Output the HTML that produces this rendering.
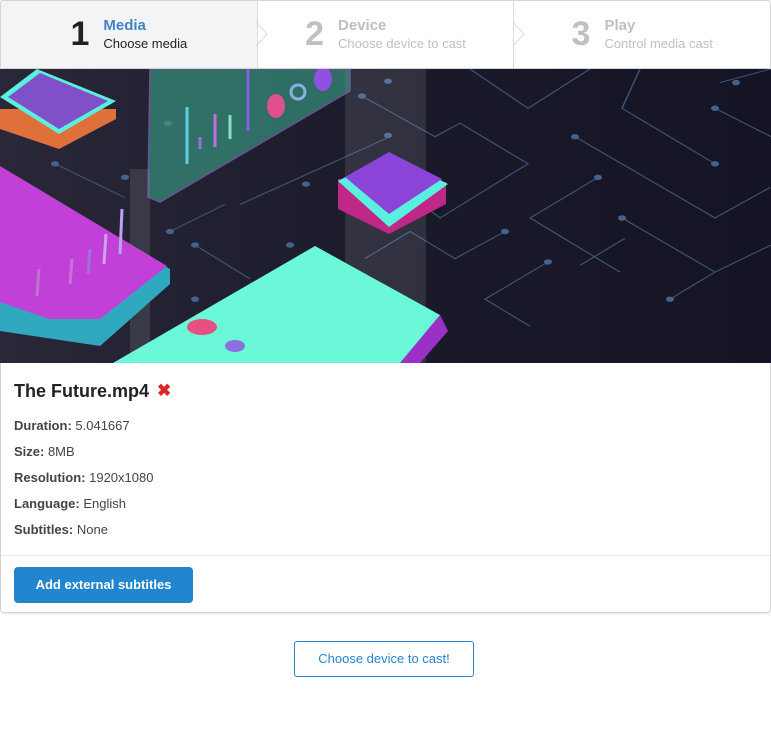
<!DOCTYPE html>
<html><head><style>
body{margin:0;width:771px;height:735px;background:#fff;font-family:"Liberation Sans",sans-serif;position:relative;overflow:hidden}
.steps{position:absolute;left:0;top:0;width:769px;height:67px;border:1px solid #d4d4d5;border-radius:3px;display:flex;overflow:hidden}
.st{flex:1;position:relative;display:flex;align-items:center;justify-content:center;border-left:1px solid #dcdcdc}
.st:first-child{border-left:none;background:#f3f4f5}
.num{font-size:34px;font-weight:bold;margin-right:14px;color:#c0c0c0}
.t{font-size:15px;font-weight:bold;color:#c0c0c0;line-height:18px}
.d{font-size:13px;color:#c0c0c0;line-height:17px}
.card{position:absolute;left:0;top:68px;width:769px;height:544px;border:1px solid #d4d4d5;border-top:none;border-radius:0 0 4px 4px;box-shadow:0 1px 2px rgba(0,0,0,.1)}
h2{position:absolute;left:14px;top:381px;margin:0;font-size:18px;color:#222;font-weight:bold}
.x{position:absolute;left:157px;top:381px;color:#db2828;font-size:17px;font-weight:bold}
.row{position:absolute;left:14px;font-size:13px;color:#444}
.row b{color:#444}
.sep{position:absolute;left:1px;width:769px;top:555px;border-top:1px solid #e8e8e8}
.btn{position:absolute;left:14px;top:567px;width:179px;height:36px;background:#2185d0;color:#fff;border-radius:4px;font-size:13px;font-weight:bold;text-align:center;line-height:36px}
.btn2{position:absolute;left:294px;top:641px;width:178px;height:34px;border:1px solid #2185d0;color:#2185d0;border-radius:3px;font-size:13px;text-align:center;line-height:34px}
</style></head><body>
<div class="steps">
 <div class="st"><span class="num" style="color:#222">1</span><div><div class="t" style="color:#4183c4">Media</div><div class="d" style="color:#222">Choose media</div></div></div>
 <div class="st"><span class="num">2</span><div><div class="t">Device</div><div class="d">Choose device to cast</div></div></div>
 <div class="st"><span class="num">3</span><div><div class="t">Play</div><div class="d">Control media cast</div></div></div>
</div>
<svg style="position:absolute;left:255px;top:0" width="14" height="68"><polyline points="1,22 12,34 1,46" fill="none" stroke="#dcdcdc"/></svg>
<svg style="position:absolute;left:512px;top:0" width="14" height="68"><polyline points="1,22 12,34 1,46" fill="none" stroke="#dcdcdc"/></svg>
<div class="card"></div>
<svg style="position:absolute;left:0;top:69px" width="771" height="294" viewBox="0 0 771 294">
<defs><linearGradient id="bg" x1="0" x2="1"><stop offset="0" stop-color="#2a2838"/><stop offset=".5" stop-color="#1a1a2a"/><stop offset="1" stop-color="#141424"/></linearGradient></defs>
<rect width="771" height="294" fill="url(#bg)"/>
<g transform="scale(1,0.677)">
<g stroke="#3e5578" stroke-width="1.5" fill="none" vector-effect="non-scaling-stroke">
<polyline points="470,0 528,58 590,0"/><polyline points="362,40 435,100 460,80 528,140 440,220 400,175"/>
<polyline points="575,100 715,220 770,175"/><polyline points="640,0 622,58 715,140"/><polyline points="715,58 771,100"/>
<polyline points="598,160 530,220 620,300"/><polyline points="622,220 715,300"/><polyline points="548,285 485,340 530,380"/>
<polyline points="505,240 455,280 410,240 365,280"/><polyline points="240,200 330,140 390,100"/><polyline points="55,140 125,190"/>
<polyline points="195,260 250,310"/><polyline points="170,240 225,200"/><polyline points="670,340 715,300 771,260"/>
<polyline points="720,20 771,0"/><polyline points="580,290 625,250"/>
</g>
<g fill="#44628c"><circle cx="388" cy="18" r="4"/><circle cx="362" cy="40" r="4"/><circle cx="575" cy="100" r="4"/><circle cx="715" cy="140" r="4"/><circle cx="715" cy="58" r="4"/><circle cx="598" cy="160" r="4"/><circle cx="622" cy="220" r="4"/><circle cx="505" cy="240" r="4"/><circle cx="548" cy="285" r="4"/><circle cx="55" cy="140" r="4"/><circle cx="125" cy="160" r="4"/><circle cx="170" cy="240" r="4"/><circle cx="195" cy="260" r="4"/><circle cx="195" cy="340" r="4"/><circle cx="306" cy="170" r="4"/><circle cx="388" cy="98" r="4"/><circle cx="736" cy="20" r="4"/><circle cx="670" cy="340" r="4"/><circle cx="290" cy="260" r="4"/><circle cx="168" cy="80" r="4"/></g>
</g>
<rect x="130" y="100" width="20" height="194" fill="#fff" opacity=".1"/>
<rect x="345" y="0" width="81" height="294" fill="#fff" opacity=".1"/>
<polygon points="150,0 350,0 350,22 160,133 148,128" fill="#3aa58a" opacity=".6" stroke="#a070e0" stroke-width="1.5"/>
<g stroke-width="3"><line x1="187" y1="95" x2="187" y2="38" stroke="#5ad0e0"/><line x1="200" y1="80" x2="200" y2="68" stroke="#9a70e0"/><line x1="215" y1="78" x2="215" y2="45" stroke="#c070e0"/><line x1="230" y1="70" x2="230" y2="46" stroke="#8ae0c0"/><line x1="248" y1="62" x2="248" y2="0" stroke="#8060e0"/></g>
<ellipse cx="276" cy="37" rx="9" ry="12" fill="#e05090"/><circle cx="298" cy="23" r="7" fill="none" stroke="#8ab0e0" stroke-width="3"/><ellipse cx="323" cy="10" rx="9" ry="12" fill="#9050e0"/>
<polygon points="0,100 170,200 170,215 100,277 0,262" fill="#30a8c0"/><polygon points="0,97 167,197 100,250 49,250 0,233" fill="#c040d8"/>
<g stroke-width="3"><line x1="37" y1="227" x2="39" y2="200" stroke="#c070d0"/><line x1="70" y1="215" x2="72" y2="190" stroke="#d070d0"/><line x1="88" y1="205" x2="90" y2="180" stroke="#a070e0"/><line x1="104" y1="195" x2="106" y2="165" stroke="#d0a0f0"/><line x1="120" y1="185" x2="122" y2="140" stroke="#c0a0f0"/></g>
<polygon points="0,40 116,40 116,50 59,80 0,60" fill="#e0703a"/><polygon points="0,28 37,0 116,32 59,65" fill="#5af0e0"/><polygon points="8,28 40,4 108,32 59,60" fill="#8050c8"/>
<polygon points="440,246 448,262 420,294 400,294" fill="#9a30c8"/><polygon points="315,177 440,246 400,294 113,294" fill="#6af8d8"/>
<ellipse cx="202" cy="258" rx="15" ry="8" fill="#e85080"/><ellipse cx="235" cy="277" rx="10" ry="6" fill="#8a70e0"/>
<polygon points="338,110 446,113 446,135 389,165 338,140" fill="#c02888"/><polygon points="338,112 389,85 448,115 389,158" fill="#5af0e0"/><polygon points="345,108 389,83 442,110 389,145" fill="#8a44d8"/>
</svg>
<h2>The Future.mp4</h2><span class="x">✖</span>
<div class="row" style="top:418px"><b>Duration:</b> 5.041667</div>
<div class="row" style="top:444px"><b>Size:</b> 8MB</div>
<div class="row" style="top:470px"><b>Resolution:</b> 1920x1080</div>
<div class="row" style="top:496px"><b>Language:</b> English</div>
<div class="row" style="top:522px"><b>Subtitles:</b> None</div>
<div class="sep"></div>
<div class="btn">Add external subtitles</div>
<div class="btn2">Choose device to cast!</div>
</body></html>
